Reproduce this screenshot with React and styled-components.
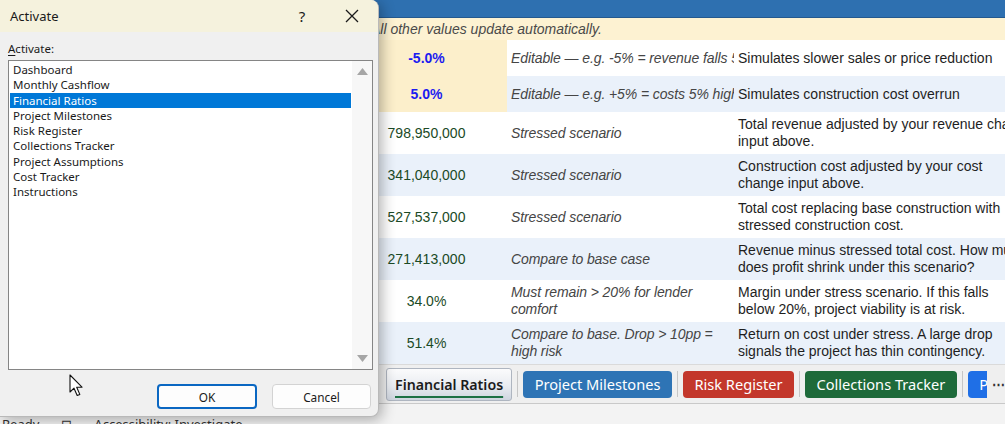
import React from 'react'
import styled, { createGlobalStyle } from 'styled-components'

// GLOBAL
const GlobalStyle = createGlobalStyle`
  html, body {
    margin: 0;
    padding: 0;
  }
  body {
    width: 1005px;
    height: 424px;
    overflow: hidden;
    background: #f3f3f3;
    font-family: "Liberation Sans", Arial, sans-serif;
  }
`

const Screen = styled.div`
  position: relative;
  width: 1005px;
  height: 424px;
  overflow: hidden;
  display: flex;
  flex-direction: column;
  background: #fff;
`

// SHEET COMPONENTS
const Sheet = styled.div`
  flex: 0 0 364px;
  display: flex;
  flex-direction: column;
  overflow: hidden;
`

const HeaderBand = styled.div`
  height: 17px;
  background: #2e70b0;
  border-bottom: 1px solid #24598e;
`

const Row = styled.div`
  display: grid;
  grid-template-columns: 346px 161px 227px 330px;
  height: ${p => p.$height}px;
  background: ${p => (p.$alt ? '#eaf1fa' : '#fff')};
  font-size: 14px;
  line-height: 17px;
`

const NoteRow = styled(Row)`
  background: #fdf2d2;
  color: #4a4a4a;
  font-style: italic;
  align-items: center;
`

const NoteText = styled.div`
  grid-column: 2 / 5;
  padding-left: 25px;
  white-space: nowrap;
`

const Cell = styled.div`
  display: flex;
  align-items: center;
  overflow: hidden;
  white-space: pre;
`

const Value = styled(Cell)`
  grid-column: 2;
  justify-content: center;
  background: ${p => (p.$input ? '#fcefcb' : 'transparent')};
  color: ${p => (p.$input ? '#1c1cf0' : '#1b4a26')};
  font-weight: ${p => (p.$input ? 700 : 400)};
`

const Desc = styled(Cell)`
  padding-left: 4px;
  font-style: italic;
  color: #454545;
  letter-spacing: -0.1px;
`

const Note = styled(Cell)`
  padding-left: 4px;
  color: #1e1e1e;
  overflow: visible;
`

// TAB BAR
const TabBar = styled.div`
  flex: 0 0 40px;
  display: flex;
  align-items: center;
  padding-left: 386px;
  background: #efefef;
  border-top: 1px solid #dadada;
  border-bottom: 1px solid #c9c9c9;
  box-sizing: border-box;
  font-family: "Noto Sans", "Liberation Sans", sans-serif;
  font-size: 14.6px;
`

const TabStrip = styled.div`
  width: 604px;
  display: flex;
  align-items: center;
  overflow: hidden;
`

const ActiveTab = styled.div`
  flex: none;
  height: 33px;
  box-sizing: border-box;
  display: flex;
  align-items: center;
  padding: 0 8px 0 8px;
  border: 1px solid #aeb5c0;
  border-radius: 3px;
  background: linear-gradient(#fbfbfc, #e9ecf1 55%, #cfd5df);
  color: #1b1b1b;
  font-size: 14.2px;
  font-weight: 600;
  text-decoration: underline;
  text-decoration-color: #1e7145;
  text-decoration-thickness: 2px;
  text-underline-offset: 6px;
`

const Tab = styled.div`
  flex: none;
  height: 27px;
  display: flex;
  align-items: center;
  padding: 0 11.5px;
  border-radius: 4px;
  background: ${p => p.$color};
  color: #fff;
`

const Sep = styled.div`
  flex: none;
  width: 1px;
  height: 26px;
  margin: 0 5px;
  background: #c6c6c6;
`

const More = styled.div`
  flex: none;
  margin-left: 5px;
  font-size: 13px;
  color: #333;
  font-weight: 700;
`

const StatusBar = styled.div`
  flex: 0 0 20px;
  display: flex;
  align-items: flex-start;
  gap: 22px;
  padding: 12px 0 0 2px;
  box-sizing: border-box;
  background: #f3f3f3;
  font-family: "Noto Sans", sans-serif;
  font-size: 13px;
  color: #333;
  line-height: 16px;
`

// DIALOG
const Dialog = styled.div`
  position: absolute;
  left: 0;
  top: 0;
  width: 379px;
  height: 417px;
  box-sizing: border-box;
  display: flex;
  flex-direction: column;
  background: #f0f0f0;
  border-right: 1px solid #b9b9b9;
  border-bottom: 1px solid #b9b9b9;
  border-radius: 0 8px 8px 0;
  box-shadow: 3px 3px 14px rgba(0, 0, 0, 0.3);
  overflow: hidden;
  font-family: "Noto Sans", "Liberation Sans", sans-serif;
  color: #1a1a1a;
`

const TitleBar = styled.div`
  height: 32px;
  flex: none;
  display: flex;
  align-items: center;
  padding-left: 10px;
  background: #f5f2dd;
`

const Title = styled.div`
  flex: 1;
  font-size: 13px;
`

const CaptionButton = styled.div`
  width: 46px;
  height: 32px;
  display: flex;
  align-items: center;
  justify-content: center;
  margin-right: ${p => p.$gap}px;
  font-size: 15px;
`

const Body = styled.div`
  flex: 1;
  display: flex;
  flex-direction: column;
  padding: 9px 5px 0 8px;
`

const FieldLabel = styled.div`
  font-size: 11.5px;
  line-height: 15px;
  u {
    text-underline-offset: 2px;
  }
`

const ListBox = styled.div`
  margin-top: 4px;
  height: 310px;
  box-sizing: border-box;
  display: flex;
  border: 1px solid #858585;
  background: #fff;
`

const Items = styled.ul`
  flex: 1;
  margin: 0;
  padding: 1px 1px 0 1px;
  list-style: none;
`

const Item = styled.li`
  height: 15.3px;
  line-height: 15.3px;
  padding-left: 3px;
  font-size: 11.5px;
  background: ${p => (p.$selected ? '#0078d7' : 'transparent')};
  color: ${p => (p.$selected ? '#fff' : '#1a1a1a')};
`

const ScrollTrack = styled.div`
  width: 20px;
  display: flex;
  flex-direction: column;
  justify-content: space-between;
  align-items: center;
  padding: 7px 0 7px 0;
  background: #f7f7f7;
`

const Buttons = styled.div`
  margin-top: 14px;
  display: flex;
  justify-content: flex-end;
  gap: 15px;
  padding-right: 2px;
`

const Button = styled.div`
  width: ${p => p.$width}px;
  height: 25px;
  box-sizing: border-box;
  display: flex;
  align-items: center;
  justify-content: center;
  border: ${p => (p.$primary ? '2px solid #0a67c2' : '1px solid #d3d3d3')};
  border-radius: 4px;
  background: #fdfdfd;
  font-size: 11.8px;
`

const Pointer = styled.svg`
  position: absolute;
  left: 69px;
  top: 374px;
`

// DATA
const rows = [
  { value: '-5.0%', input: true, desc: 'Editable — e.g. -5% = revenue falls 5%', note: 'Simulates slower sales or price reduction' },
  { value: '5.0%', input: true, alt: true, desc: 'Editable — e.g. +5% = costs 5% higher', note: 'Simulates construction cost overrun' },
  { value: '798,950,000', desc: 'Stressed scenario', note: 'Total revenue adjusted by your revenue change\ninput above.' },
  { value: '341,040,000', alt: true, desc: 'Stressed scenario', note: 'Construction cost adjusted by your cost\nchange input above.' },
  { value: '527,537,000', desc: 'Stressed scenario', note: 'Total cost replacing base construction with\nstressed construction cost.' },
  { value: '271,413,000', alt: true, desc: 'Compare to base case', note: 'Revenue minus stressed total cost. How much\ndoes profit shrink under this scenario?' },
  { value: '34.0%', desc: 'Must remain > 20% for lender\ncomfort', note: 'Margin under stress scenario. If this falls\nbelow 20%, project viability is at risk.' },
  { value: '51.4%', alt: true, desc: 'Compare to base. Drop > 10pp =\nhigh risk', note: 'Return on cost under stress. A large drop\nsignals the project has thin contingency.' },
]

const sheets = [
  'Dashboard',
  'Monthly Cashflow',
  'Financial Ratios',
  'Project Milestones',
  'Risk Register',
  'Collections Tracker',
  'Project Assumptions',
  'Cost Tracker',
  'Instructions',
]

const tabs = [
  { name: 'Project Milestones', color: '#2e74b5' },
  { name: 'Risk Register', color: '#c3372b' },
  { name: 'Collections Tracker', color: '#1e6a3a' },
  { name: 'Project Assumptions', color: '#1f6fe6' },
]

const Arrow = ({ down }) => (
  <svg width="11" height="7" viewBox="0 0 11 7">
    <path d={down ? 'M0 0 H11 L5.5 7 Z' : 'M0 7 H11 L5.5 0 Z'} fill="#a6a6a6" />
  </svg>
)

export default function App() {
  return (
    <Screen>
      <GlobalStyle />
      <Sheet>
        <HeaderBand />
        <NoteRow $height={22}>
          <NoteText>All other values update automatically.</NoteText>
        </NoteRow>
        {rows.map(r => (
          <Row key={r.value} $alt={r.alt} $height={r.input ? 36 : 42}>
            <Value $input={r.input}>{r.value}</Value>
            <Desc>{r.desc}</Desc>
            <Note>{r.note}</Note>
          </Row>
        ))}
      </Sheet>

      <TabBar>
        <TabStrip>
          <ActiveTab>Financial Ratios</ActiveTab>
          {tabs.map(t => (
            <React.Fragment key={t.name}>
              <Sep />
              <Tab $color={t.color}>{t.name}</Tab>
            </React.Fragment>
          ))}
        </TabStrip>
        <More>⋯</More>
      </TabBar>

      <StatusBar>
        <span>Ready</span>
        <span>⊡</span>
        <span>Accessibility: Investigate</span>
      </StatusBar>

      <Dialog>
        <TitleBar>
          <Title>Activate</Title>
          <CaptionButton $gap={4}>?</CaptionButton>
          <CaptionButton $gap={3}>
            <svg width="14" height="14" viewBox="0 0 14 14">
              <path d="M1 1 L13 13 M13 1 L1 13" stroke="#1a1a1a" strokeWidth="1.3" />
            </svg>
          </CaptionButton>
        </TitleBar>
        <Body>
          <FieldLabel><u>A</u>ctivate:</FieldLabel>
          <ListBox>
            <Items>
              {sheets.map(s => (
                <Item key={s} $selected={s === 'Financial Ratios'}>{s}</Item>
              ))}
            </Items>
            <ScrollTrack>
              <Arrow />
              <Arrow down />
            </ScrollTrack>
          </ListBox>
          <Buttons>
            <Button $primary $width={100}>OK</Button>
            <Button $width={99}>Cancel</Button>
          </Buttons>
        </Body>
      </Dialog>

      <Pointer width="15" height="23" viewBox="0 0 15 23">
        <path d="M1 1 L1 18 L5 14.2 L8.2 21.5 L10.8 20.4 L7.7 13.2 L13 13.2 Z" fill="#fff" stroke="#111" strokeWidth="1.1" strokeLinejoin="round" />
      </Pointer>
    </Screen>
  )
}
